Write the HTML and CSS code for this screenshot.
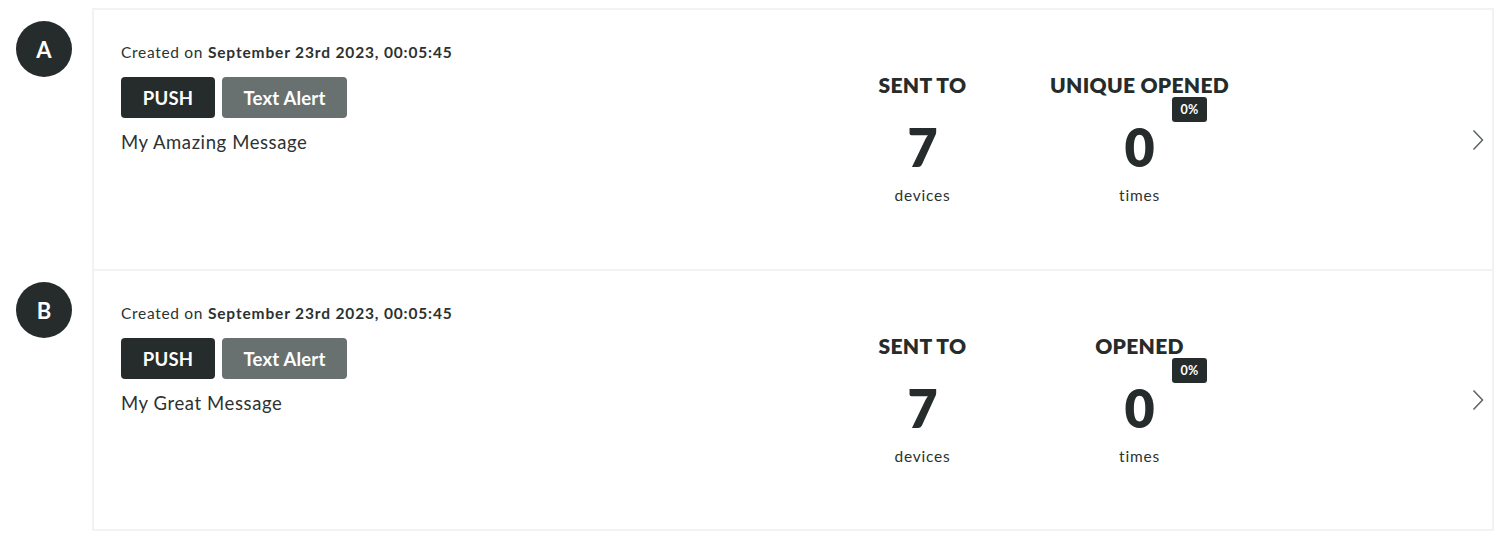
FILE: index.html
```html
<!DOCTYPE html>
<html lang="en">
<head>
    <meta charset="UTF-8">
    <title>Messages</title>
    <link rel="stylesheet" href="styles.css">
</head>
<body>
    <div class="list">
        <div class="item">
            <div class="marker"><span class="letter">A</span></div>
            <div class="card">
                <div class="info">
                    <div class="created">Created on <b>September 23rd 2023, 00:05:45</b></div>
                    <div class="tags">
                        <span class="tag push">PUSH</span>
                        <span class="tag alert">Text Alert</span>
                    </div>
                    <div class="title">My Amazing Message</div>
                </div>
                <div class="stats">
                    <div class="stat">
                        <div class="label">SENT TO</div>
                        <div class="num">7</div>
                        <div class="unit">devices</div>
                    </div>
                    <div class="stat">
                        <div class="label">UNIQUE OPENED</div>
                        <div class="num">0<span class="badge">0%</span></div>
                        <div class="unit">times</div>
                    </div>
                </div>
                <div class="chevron">
                    <svg width="12" height="22" viewBox="0 0 12 22"><path d="M1.5 1.5 L10.5 11 L1.5 20.5" fill="none" stroke="#5b6362" stroke-width="1.5"/></svg>
                </div>
            </div>
        </div>
        <div class="item">
            <div class="marker"><span class="letter">B</span></div>
            <div class="card last">
                <div class="info">
                    <div class="created">Created on <b>September 23rd 2023, 00:05:45</b></div>
                    <div class="tags">
                        <span class="tag push">PUSH</span>
                        <span class="tag alert">Text Alert</span>
                    </div>
                    <div class="title">My Great Message</div>
                </div>
                <div class="stats">
                    <div class="stat">
                        <div class="label">SENT TO</div>
                        <div class="num">7</div>
                        <div class="unit">devices</div>
                    </div>
                    <div class="stat">
                        <div class="label">OPENED</div>
                        <div class="num">0<span class="badge">0%</span></div>
                        <div class="unit">times</div>
                    </div>
                </div>
                <div class="chevron">
                    <svg width="12" height="22" viewBox="0 0 12 22"><path d="M1.5 1.5 L10.5 11 L1.5 20.5" fill="none" stroke="#5b6362" stroke-width="1.5"/></svg>
                </div>
            </div>
        </div>
    </div>
</body>
</html>
```

FILE: styles.css
```css
body {
    margin: 0;
    padding: 0;
    background-color: #ffffff;
    font-family: Lato, "Open Sans", sans-serif;
    color: #262c2b;
}

.list {
    padding-top: 8px;
    width: 1494px;
}

.item {
    display: flex;
}

.marker {
    width: 92px;
    flex-shrink: 0;
    padding-top: 13px;
    padding-left: 16px;
    box-sizing: border-box;
}

.letter {
    display: flex;
    align-items: center;
    justify-content: center;
    width: 56px;
    height: 56px;
    border-radius: 50%;
    background-color: #262c2b;
    color: #ffffff;
    font-weight: 700;
    font-size: 22px;
}

.card {
    flex: 1;
    display: flex;
    height: 261px;
    box-sizing: border-box;
    border: 2px solid #f2f2f2;
    border-bottom: none;
    padding-left: 27px;
}

.card.last {
    height: 262px;
    border-bottom: 2px solid #f2f2f2;
}

.info {
    flex: 1;
    padding-top: 33px;
}

.created {
    font-size: 15.5px;
    letter-spacing: 0.7px;
    color: #2c3231;
}

.created b {
    font-weight: 700;
    letter-spacing: 0.85px;
}

.tags {
    display: flex;
    gap: 7px;
    margin-top: 16px;
}

.tag {
    display: inline-flex;
    align-items: center;
    justify-content: center;
    height: 41px;
    border-radius: 4px;
    color: #ffffff;
    font-weight: 700;
    font-size: 18.5px;
    letter-spacing: 0.2px;
    box-sizing: border-box;
}

.push {
    width: 94px;
    background-color: #262c2b;
}

.alert {
    width: 125px;
    background-color: #687170;
}

.title {
    margin-top: 13px;
    font-size: 18.5px;
    letter-spacing: 0.6px;
    color: #2c3231;
}

.stats {
    display: flex;
    align-items: center;
    padding-left: 5px;
    padding-bottom: 3px;
}

.stat {
    width: 217px;
    text-align: center;
}

.label {
    font-size: 21px;
    font-weight: 800;
    letter-spacing: 0.3px;
}

.num {
    position: relative;
    display: inline-block;
    font-size: 52px;
    font-weight: 800;
    line-height: 1;
    margin-top: 24px;
}

.badge {
    position: absolute;
    left: 48px;
    top: -24px;
    background-color: #262c2b;
    color: #ffffff;
    font-size: 12.5px;
    font-weight: 700;
    padding: 5px 8px;
    border-radius: 3px;
    line-height: 15px;
    letter-spacing: 0.3px;
}

.unit {
    margin-top: 13px;
    font-size: 15.5px;
    letter-spacing: 0.8px;
    color: #2c3231;
}

.chevron {
    display: flex;
    align-items: center;
    padding-left: 224px;
    padding-right: 8px;
}
```
